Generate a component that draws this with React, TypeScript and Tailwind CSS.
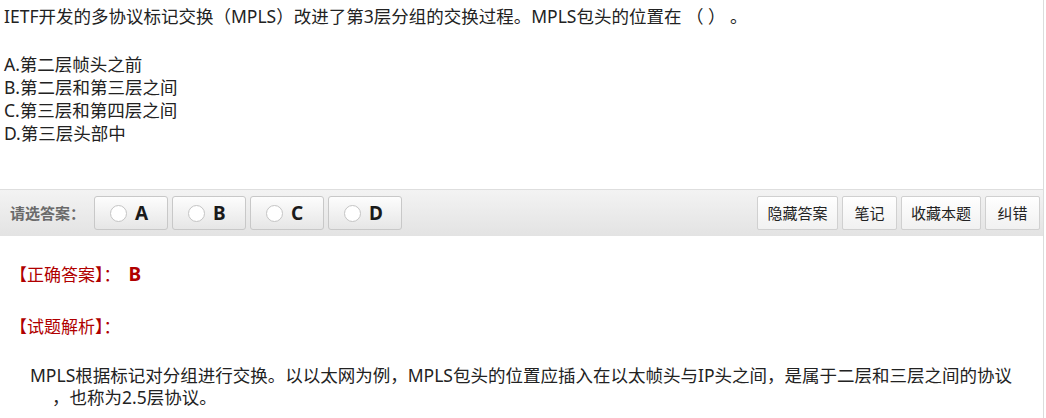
const FONT = "font-['Noto_Sans','Noto_Sans_CJK_SC',sans-serif]";

function ChoiceButton({ letter }: { letter: string }) {
  return (
    <button className="flex h-[34px] w-[74px] items-center gap-[8px] rounded-[3px] border border-[#c8c8c8] bg-gradient-to-b from-[#fdfdfd] to-[#e6e6e6] pl-[15px]">
      <span className="h-[17px] w-[17px] rounded-full border border-[#c4c4c4] bg-white" />
      <span className="text-[19px] font-bold leading-none text-[#1a1a1a]">{letter}</span>
    </button>
  );
}

function ToolButton({ label, w }: { label: string; w: string }) {
  return (
    <button
      className={`flex h-[34px] ${w} items-center justify-center rounded-[2px] border border-[#d0d0d0] bg-gradient-to-b from-white to-[#f1f1f1] text-[15px] text-[#222]`}
    >
      {label}
    </button>
  );
}

export default function App() {
  return (
    <div className={`h-[418px] w-[1046px] overflow-hidden bg-white ${FONT} text-[#222]`}>
      <div className="h-full w-[1044px] border-r border-[#dcdcdc]">
        {/* Question */}
        <div className="px-[4px] pt-[5px] text-[17.5px] leading-[23px]">
          <p>IETF开发的多协议标记交换（MPLS）改进了第3层分组的交换过程。MPLS包头的位置在 （ ） 。</p>
          <div className="mt-[25px]">
            <p>A.第二层帧头之前</p>
            <p>B.第二层和第三层之间</p>
            <p>C.第三层和第四层之间</p>
            <p>D.第三层头部中</p>
          </div>
        </div>

        {/* Answer toolbar */}
        <div className="mt-[44px] flex h-[47px] items-center justify-between border-t border-[#dedede] bg-gradient-to-b from-[#f3f3f3] to-[#e3e3e3] pl-[10px] pr-[3px]">
          <div className="flex items-center">
            <span className="w-[84px] text-[15px] font-bold text-[#6a6a6a]">请选答案：</span>
            <div className="flex gap-[4px]">
              <ChoiceButton letter="A" />
              <ChoiceButton letter="B" />
              <ChoiceButton letter="C" />
              <ChoiceButton letter="D" />
            </div>
          </div>
          <div className="flex gap-[4px]">
            <ToolButton label="隐藏答案" w="w-[81px]" />
            <ToolButton label="笔记" w="w-[55px]" />
            <ToolButton label="收藏本题" w="w-[80px]" />
            <ToolButton label="纠错" w="w-[55px]" />
          </div>
        </div>

        {/* Answer */}
        <div className="px-[10px] pt-[25px] text-[17px] text-[#b00000]">
          <p className="flex items-baseline leading-[26px]">
            <span>【正确答案】：</span>
            <span className="ml-[8px] text-[19px] font-bold">B</span>
          </p>
          <p className="mt-[26px] leading-[26px]">【试题解析】：</p>
        </div>
        <div className="pl-[30px] pr-[20px] pt-[24px] text-[17.5px] leading-[22px] text-[#222]">
          <p>
            MPLS根据标记对分组进行交换。以以太网为例，MPLS包头的位置应插入在以太帧头与IP头之间，是属于二层和三层之间的协议
          </p>
          <p className="pl-[22px]">，也称为2.5层协议。</p>
        </div>
      </div>
    </div>
  );
}
